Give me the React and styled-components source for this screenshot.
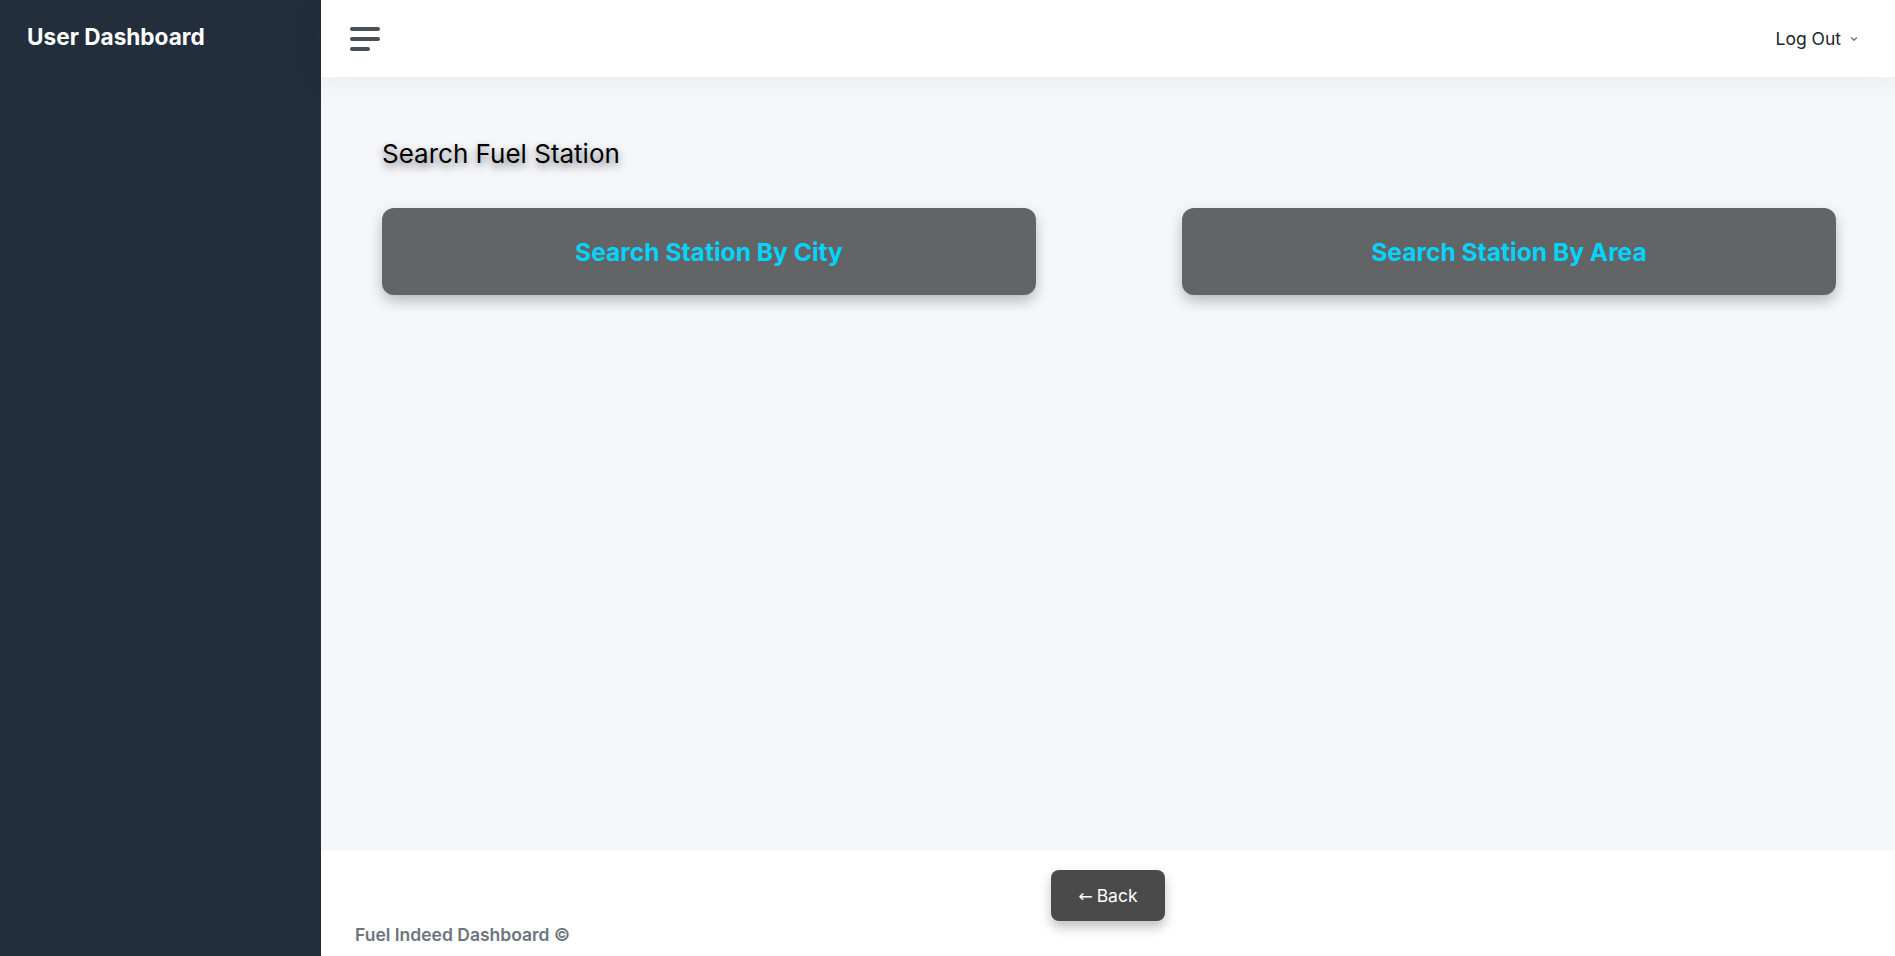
import React from 'react';
import styled, { createGlobalStyle } from 'styled-components';

const GlobalStyle = createGlobalStyle`
  * { box-sizing: border-box; }
  body {
    margin: 0;
    font-family: Inter, "Noto Sans", sans-serif;
    background: #f5f7fb;
  }
`;

const Wrapper = styled.div`
  display: flex;
  min-height: 956px;
`;

const Sidebar = styled.nav`
  width: 321px;
  flex-shrink: 0;
  background-color: #222e3c;
`;

const Brand = styled.div`
  padding: 23px 27px;
  color: #ffffff;
  font-size: 22.6px;
  font-weight: 700;
  line-height: 28px;
`;

const Main = styled.div`
  flex: 1;
  display: flex;
  flex-direction: column;
  min-width: 0;
`;

const Navbar = styled.header`
  height: 77px;
  background: #ffffff;
  display: flex;
  align-items: center;
  justify-content: space-between;
  padding: 0 36px 0 29px;
  box-shadow: 0 0 32px rgba(33, 37, 41, 0.08);
  position: relative;
  z-index: 1;
`;

const Toggle = styled.div`
  display: flex;
  flex-direction: column;
  gap: 6px;
  width: 30px;
  cursor: pointer;

  span {
    display: block;
    height: 4px;
    border-radius: 2px;
    background: #495057;
  }
  span:last-child {
    width: 20px;
  }
`;

const UserMenu = styled.div`
  display: flex;
  align-items: center;
  gap: 8px;
  color: #212529;
  font-size: 17.5px;
  cursor: pointer;
`;

const Content = styled.main`
  flex: 1;
  padding: 61px 59px 40px 61px;
`;

const Heading = styled.h3`
  margin: 0 0 38px;
  font-size: 26px;
  font-weight: 400;
  line-height: 32px;
  color: #000000;
  text-shadow: 0 4px 8px rgba(0, 0, 0, 0.55);
`;

const CardRow = styled.div`
  display: flex;
  justify-content: space-between;
`;

const SearchCard = styled.a`
  width: 654px;
  height: 87px;
  border-radius: 12px;
  background: #636466;
  display: flex;
  align-items: center;
  justify-content: center;
  color: #00d4ff;
  font-size: 24.6px;
  font-weight: 700;
  text-decoration: none;
  box-shadow: 0 6px 14px rgba(0, 0, 0, 0.25);
  cursor: pointer;
`;

const Footer = styled.footer`
  background: #ffffff;
  height: 106px;
  padding: 20px 34px 0;
`;

const BackRow = styled.div`
  display: flex;
  justify-content: center;
`;

const BackButton = styled.button`
  width: 114px;
  height: 51px;
  border: none;
  border-radius: 8px;
  background: #4a4a4a;
  color: #ffffff;
  font-family: Inter, sans-serif;
  font-size: 17.5px;
  box-shadow: 0 6px 12px rgba(0, 0, 0, 0.25);
  cursor: pointer;

  .arrow {
    font-family: "DejaVu Sans", sans-serif;
    font-size: 17px;
    margin-right: 4px;
  }
`;

const Copyright = styled.p`
  margin: 3px 0 0;
  color: #6c757d;
  font-size: 17.5px;
  font-weight: 600;
`;

const Chevron = () => (
  <svg width="10" height="10" viewBox="0 0 24 24" fill="none" stroke="#6c757d" strokeWidth="3" strokeLinecap="round" strokeLinejoin="round">
    <polyline points="6 9 12 15 18 9" />
  </svg>
);

const App = () => (
  <>
    <GlobalStyle />
    <Wrapper>
      <Sidebar>
        <Brand>User Dashboard</Brand>
      </Sidebar>
      <Main>
        <Navbar>
          <Toggle>
            <span />
            <span />
            <span />
          </Toggle>
          <UserMenu>
            Log Out <Chevron />
          </UserMenu>
        </Navbar>
        <Content>
          <Heading>Search Fuel Station</Heading>
          <CardRow>
            <SearchCard>Search Station By City</SearchCard>
            <SearchCard>Search Station By Area</SearchCard>
          </CardRow>
        </Content>
        <Footer>
          <BackRow>
            <BackButton><span className="arrow">←</span>Back</BackButton>
          </BackRow>
          <Copyright>Fuel Indeed Dashboard ©</Copyright>
        </Footer>
      </Main>
    </Wrapper>
  </>
);

export default App;
